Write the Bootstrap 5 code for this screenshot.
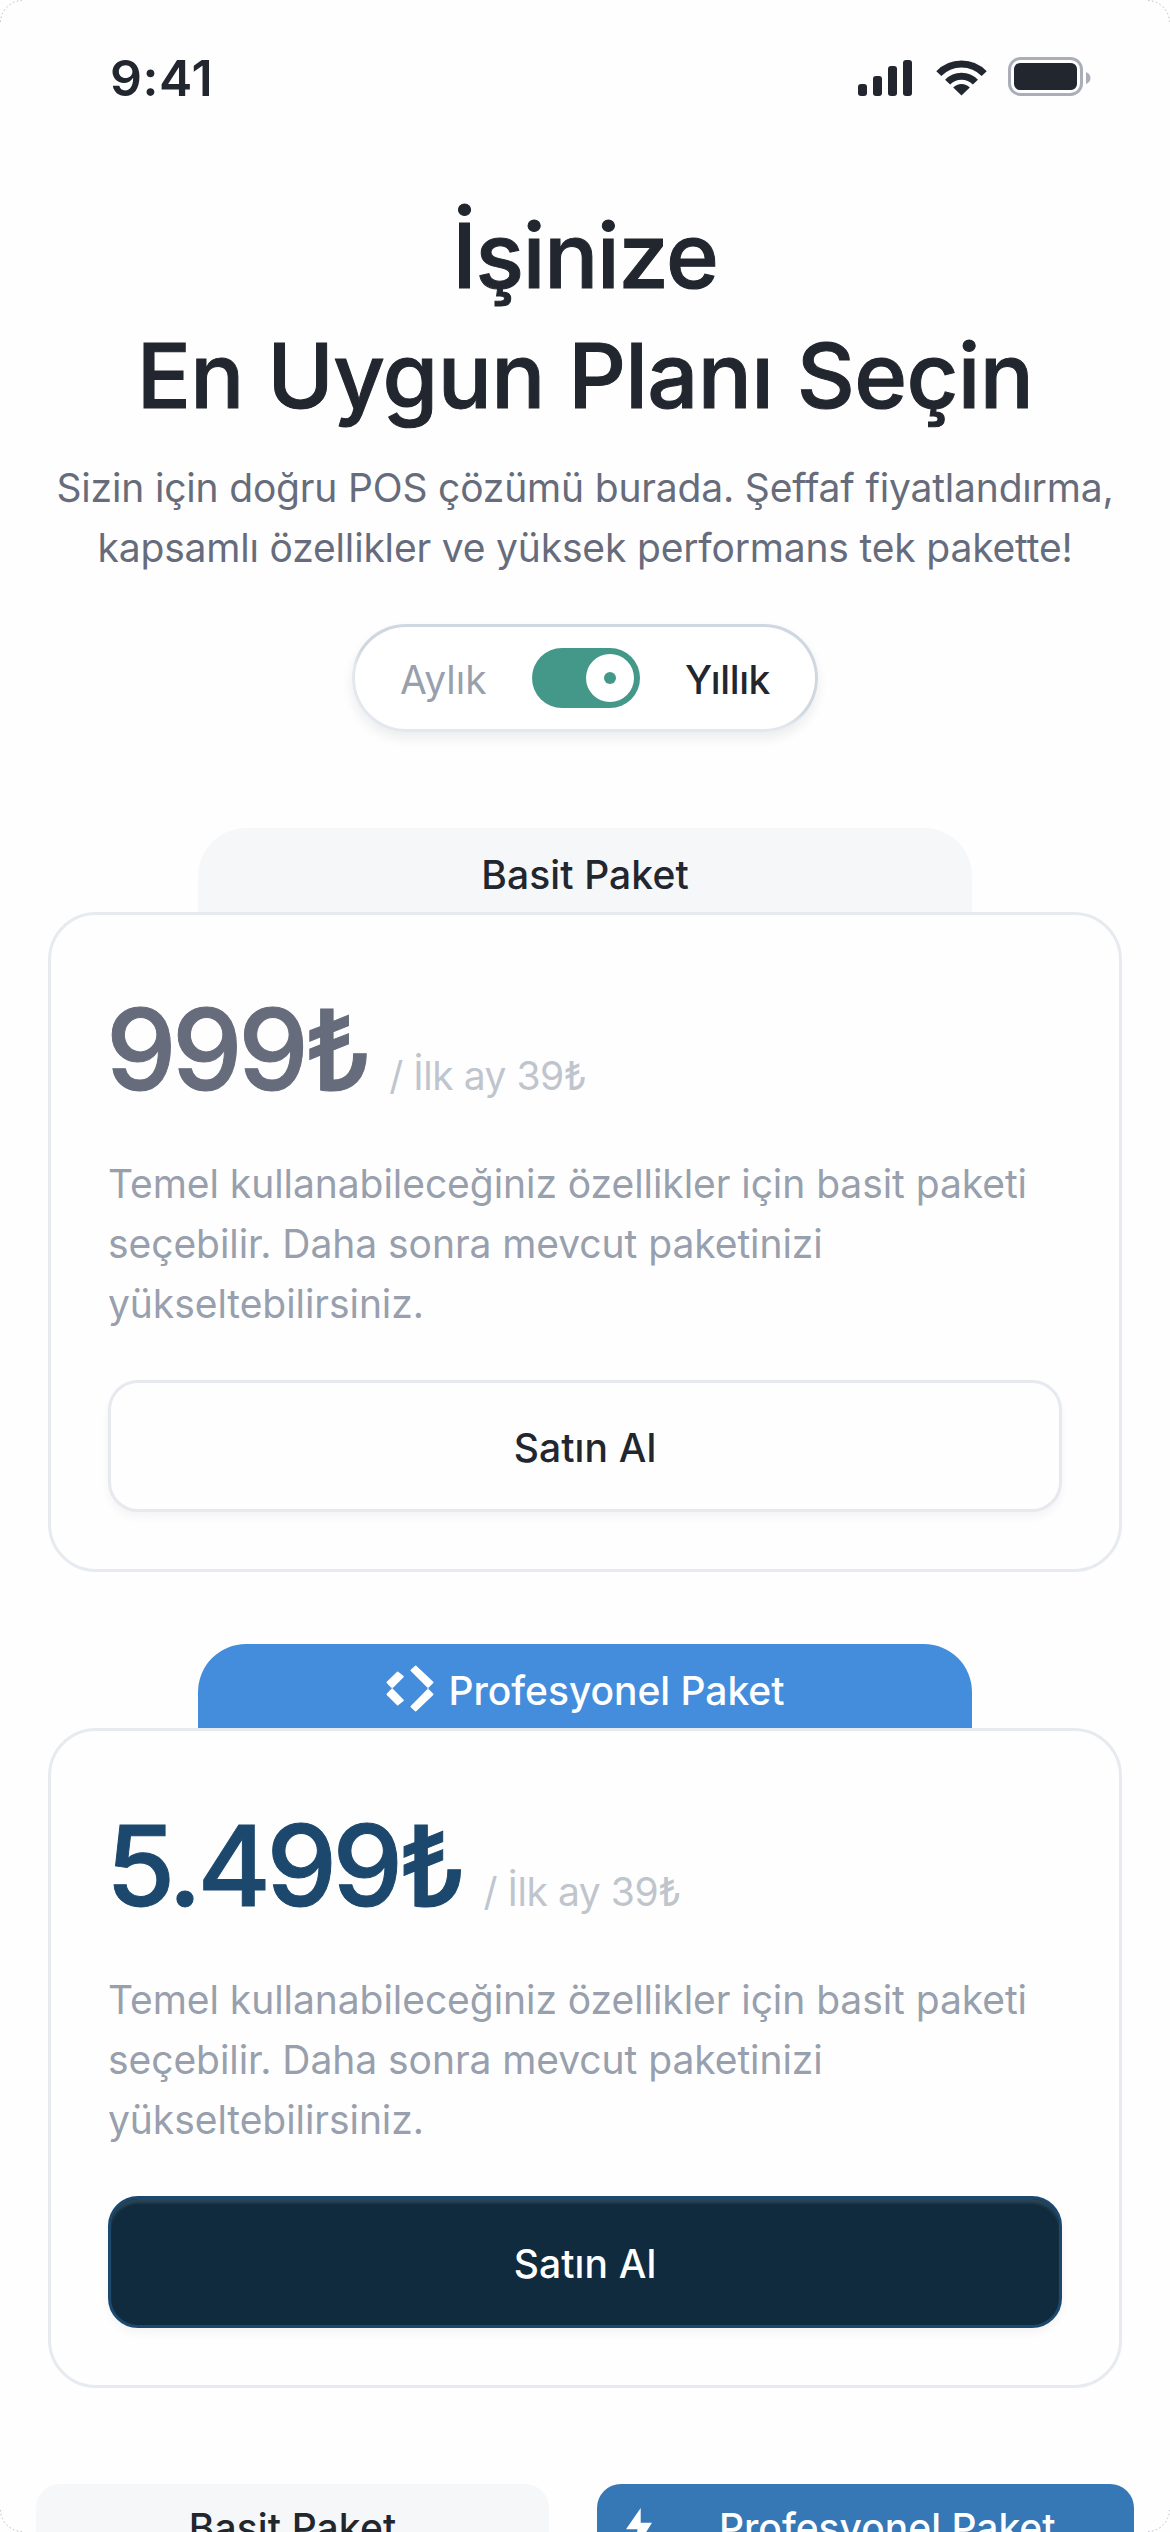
<!DOCTYPE html>
<html lang="tr">
<head>
<meta charset="utf-8">
<meta name="viewport" content="width=device-width, initial-scale=1">
<title>Planlar</title>
<link href="https://cdn.jsdelivr.net/npm/bootstrap@5.3.0/dist/css/bootstrap.min.css" rel="stylesheet">
<style>
  body { background: #fefefe; color: #22262f; font-family: Inter, "Liberation Sans", sans-serif; font-size: 39px; line-height: 60px; font-kerning: normal; }
  .screen { width: 1170px; height: 2532px; }
  .status { height: 196px; padding: 48px 79px 0 110px; }
  .clock { font-size: 50px; font-weight: 600; letter-spacing: .012em; line-height: 60px; }
  .status svg { margin-top: 9px; }
  .headline { font-size: 90px; line-height: 120px; font-weight: 500; letter-spacing: -.007em; margin-bottom: 22px; -webkit-text-stroke: 1px currentColor; }
  .headline .first { letter-spacing: -.014em; }
  .intro { color: #666c7b; letter-spacing: -.0045em; margin-bottom: 46px; }
  .period { width: 466px; height: 108px; padding: 0 45px; border: 3px solid transparent; border-radius: 54px;
    background: linear-gradient(#fff, #fff) padding-box, linear-gradient(188deg, #cfd8e1 52%, #e4e8ee 62%) border-box;
    box-shadow: 0 6px 12px rgba(16, 24, 40, .08); }
  .period-label { padding-top: 4px; }
  .period-on { font-weight: 500; letter-spacing: -.01em; }
  .muted-label { color: #989fad; }
  .switch { width: 108px; height: 60px; padding: 6px; background: #439889; }
  .knob { width: 48px; height: 48px; }
  .knob span { width: 12px; height: 12px; background: #439889; }
  .plans { padding: 96px 48px 0; gap: 72px; }
  .plan-tab { width: 774px; height: 84px; padding-top: 17px; border-radius: 48px 48px 0 0; font-weight: 500; gap: 15px; }
  .tab-plain { background: #f6f7f9; letter-spacing: .003em; }
  .tab-pro { background: #438ddc; color: #fff; letter-spacing: -.001em; }
  .tab-icon { margin-top: 4px; }
  .plan-box { width: 1074px; height: 660px; padding: 68px 57px 0; border: 3px solid #e7eaef; border-radius: 48px; }
  .price { font-size: 112px; line-height: 132px; font-weight: 500; letter-spacing: -.04em; color: #666c7b; margin-left: -2px; -webkit-text-stroke: 1px currentColor; }
  .price-pro { color: #1d486d; }
  .per { color: #bfc5cd; letter-spacing: -.012em; margin-left: 21px; }
  .about { color: #989fad; margin: 39px 0 46px; letter-spacing: -.0015em; }
  .buy { height: 132px; border: 3px solid #e6e9ee; border-radius: 30px; padding: 4px 0 0; font-size: 39px; font-weight: 500; letter-spacing: .003em; color: #22262f; background: #fefefe; box-shadow: 0 5px 8px rgba(16, 24, 40, .045); }
  .buy-pro { border-color: #1d486d; background: #0f2b3d; color: #fff; box-shadow: inset 0 5px 3px -1px rgba(255, 255, 255, .12), 0 5px 8px rgba(16, 24, 40, .045); }
  .mini-row { padding: 96px 36px 0; gap: 48px; }
  .mini { height: 48px; padding-top: 14px; border-radius: 24px 24px 0 0; font-weight: 500; }
  .mini-plain { width: 513px; }
  .mini-pro { width: 537px; background: #3677b5; color: #fff; padding-left: 29px; }
  .mini-pro .name { margin-left: 67px; }
  .mini-pro svg { margin-top: 10px; }
  .corner { width: 24px; height: 24px; }
</style>
</head>
<body>
<div class="screen position-relative overflow-hidden d-flex flex-column">

  <header class="status d-flex justify-content-between align-items-start flex-shrink-0">
    <span class="clock">9:41</span>
    <svg width="233" height="39" viewBox="858 57 233 39" fill="#22262f">
      <rect x="858" y="84" width="9" height="12" rx="3"/>
      <rect x="873" y="76" width="9" height="20" rx="3"/>
      <rect x="888" y="66" width="9" height="30" rx="3"/>
      <rect x="903" y="60" width="9" height="36" rx="3"/>
      <g fill="none" stroke="#22262f" stroke-width="7">
        <path d="M938.8 73.6A31.5 31.5 0 0 1 984.2 73.6"/>
        <path d="M947.6 82.1A19.3 19.3 0 0 1 975.4 82.1"/>
      </g>
      <path d="M953.2 87.5A11.5 11.5 0 0 1 969.8 87.5L961.5 95.5Z"/>
      <rect x="1009.5" y="58.5" width="72" height="36" rx="11" fill="none" stroke="#a9aeb8" stroke-width="3"/>
      <rect x="1014" y="63" width="63" height="27" rx="6"/>
      <path d="M1086 72Q1090.500 74 1090.500 78T1086 84Z" fill="#a9aeb8"/>
    </svg>
  </header>

  <section class="text-center flex-shrink-0">
    <h1 class="headline"><span class="first">İşinize</span><br>En Uygun Planı Seçin</h1>
    <p class="intro">Sizin için doğru POS çözümü burada. Şeffaf fiyatlandırma,<br>kapsamlı özellikler ve yüksek performans tek pakette!</p>
    <div class="period d-flex align-items-center justify-content-between mx-auto">
      <span class="period-label muted-label">Aylık</span>
      <span class="switch rounded-pill d-flex justify-content-end">
        <span class="knob rounded-circle bg-white d-flex align-items-center justify-content-center"><span class="rounded-circle"></span></span>
      </span>
      <span class="period-label period-on">Yıllık</span>
    </div>
  </section>

  <main class="plans d-flex flex-column flex-shrink-0">
    <article class="d-flex flex-column align-items-center">
      <div class="plan-tab tab-plain text-center">Basit Paket</div>
      <div class="plan-box">
        <div class="d-flex align-items-baseline"><span class="price">999₺</span><span class="per">/ İlk ay 39₺</span></div>
        <p class="about">Temel kullanabileceğiniz özellikler için basit paketi<br>seçebilir. Daha sonra mevcut paketinizi<br>yükseltebilirsiniz.</p>
        <button type="button" class="btn buy w-100">Satın Al</button>
      </div>
    </article>

    <article class="d-flex flex-column align-items-center">
      <div class="plan-tab tab-pro d-flex justify-content-center">
        <svg class="tab-icon" width="48" height="47" viewBox="78 106 144 141" fill="#fff" stroke="#fff" stroke-width="5" stroke-linejoin="round">
          <path d="M82 158L113 128L129 141L99 171H94Z"/>
          <path d="M82 194L113 225L129 212L99 181H94Z"/>
          <path d="M154 122L167 110L218 158L206 170H202Z"/>
          <path d="M154 231L167 243L218 194L206 182H202Z"/>
          <path d="M96.500 170V182M204 170V182" stroke-width="3"/>
        </svg>
        <span>Profesyonel Paket</span>
      </div>
      <div class="plan-box">
        <div class="d-flex align-items-baseline"><span class="price price-pro">5.499₺</span><span class="per">/ İlk ay 39₺</span></div>
        <p class="about">Temel kullanabileceğiniz özellikler için basit paketi<br>seçebilir. Daha sonra mevcut paketinizi<br>yükseltebilirsiniz.</p>
        <button type="button" class="btn buy buy-pro w-100">Satın Al</button>
      </div>
    </article>
  </main>

  <footer class="mini-row d-flex flex-shrink-0">
    <div class="mini mini-plain tab-plain text-center">Basit Paket</div>
    <div class="mini mini-pro d-flex align-items-start">
      <svg width="26" height="42" viewBox="0 0 26 42" fill="#fff"><path d="M14.700 0V14.700H26L9 42L11.500 21.300H0Z"/></svg>
      <span class="name">Profesyonel Paket</span>
    </div>
  </footer>

  <svg class="corner position-absolute top-0 start-0" viewBox="0 0 24 24" fill="none" stroke="#b4b9c2" stroke-dasharray="1.500 2.500"><path d="M.5 22A22 22 0 0 1 22 .5"/></svg>
  <svg class="corner position-absolute top-0 end-0" viewBox="0 0 24 24" fill="none" stroke="#b4b9c2" stroke-dasharray="1.500 2.500"><path d="M2 .5A22 22 0 0 1 23.500 22"/></svg>
  <svg class="corner position-absolute bottom-0 start-0" viewBox="0 0 24 24" fill="none" stroke="#b4b9c2" stroke-dasharray="1.500 2.500"><path d="M.5 2A22 22 0 0 0 22 23.500"/></svg>
  <svg class="corner position-absolute bottom-0 end-0" viewBox="0 0 24 24" fill="none" stroke="#b4b9c2" stroke-dasharray="1.500 2.500"><path d="M2 23.500A22 22 0 0 0 23.500 2"/></svg>
</div>
<script src="https://cdn.jsdelivr.net/npm/bootstrap@5.3.0/dist/js/bootstrap.bundle.min.js"></script>
</body>
</html>
